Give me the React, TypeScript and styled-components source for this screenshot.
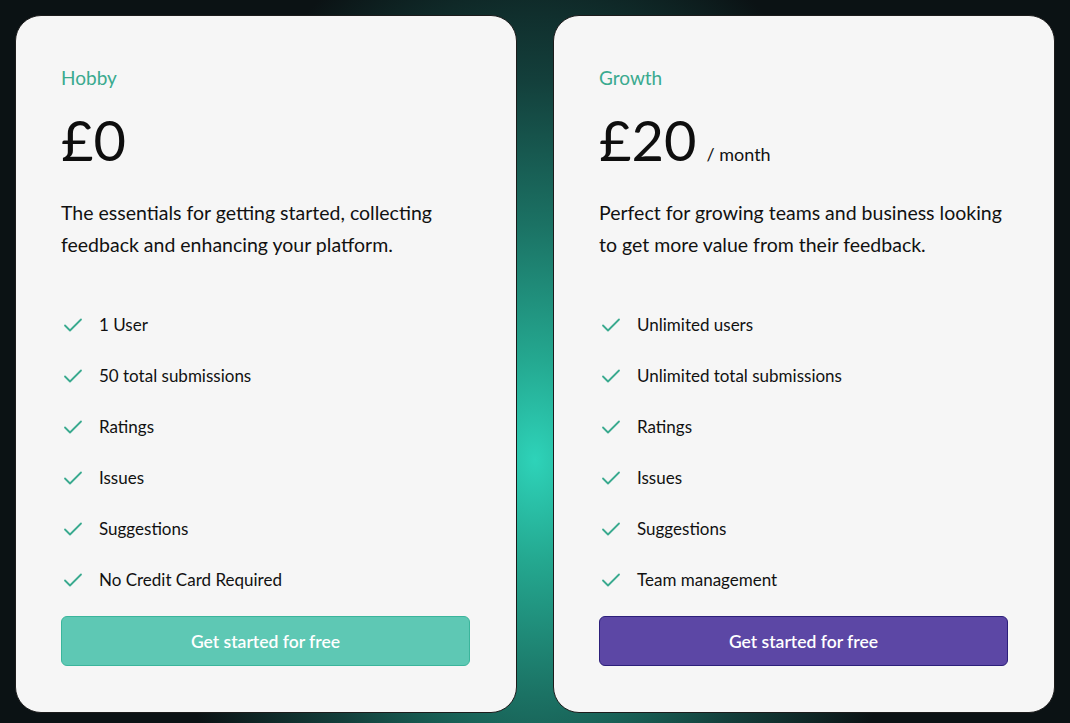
import React from "react";
import styled, { createGlobalStyle } from "styled-components";

const GlobalStyle = createGlobalStyle`
  * { box-sizing: border-box; }
  html, body { margin: 0; padding: 0; }
  body {
    font-family: "Lato", "Noto Sans", sans-serif;
    background: #0b1012;
  }
`;

type Plan = {
  name: string;
  price: string;
  period?: string;
  description: string;
  features: string[];
  variant: "teal" | "purple";
};

const plans: Plan[] = [
  {
    name: "Hobby",
    price: "£0",
    description:
      "The essentials for getting started, collecting feedback and enhancing your platform.",
    features: [
      "1 User",
      "50 total submissions",
      "Ratings",
      "Issues",
      "Suggestions",
      "No Credit Card Required",
    ],
    variant: "teal",
  },
  {
    name: "Growth",
    price: "£20",
    period: "/ month",
    description:
      "Perfect for growing teams and business looking to get more value from their feedback.",
    features: [
      "Unlimited users",
      "Unlimited total submissions",
      "Ratings",
      "Issues",
      "Suggestions",
      "Team management",
    ],
    variant: "purple",
  },
];

const Check = () => (
  <svg width="20" height="16" viewBox="0 0 20 16" fill="none">
    <path
      d="M2 8.5 L7 13.5 L18 2.5"
      stroke="#3aaa8f"
      strokeWidth="1.8"
      strokeLinecap="round"
      strokeLinejoin="round"
    />
  </svg>
);

const App = () => {
  return (
    <>
      <GlobalStyle />
      <Page>
        {plans.map((plan) => (
          <Card key={plan.name}>
            <PlanName>{plan.name}</PlanName>
            <PriceRow>
              <Price>{plan.price}</Price>
              {plan.period && <Period>{plan.period}</Period>}
            </PriceRow>
            <Description>{plan.description}</Description>
            <Features>
              {plan.features.map((f) => (
                <Feature key={f}>
                  <Check />
                  <span>{f}</span>
                </Feature>
              ))}
            </Features>
            <CtaButton variant={plan.variant}>Get started for free</CtaButton>
          </Card>
        ))}
      </Page>
    </>
  );
};

export default App;

const Page = styled.div`
  width: 1070px;
  height: 723px;
  overflow: hidden;
  display: grid;
  grid-template-columns: 502px 502px;
  column-gap: 36px;
  padding: 15px 15px 10px 15px;
  background: radial-gradient(
    ellipse 380px 560px at 535px 460px,
    #2ed3b9 0%,
    #24a890 18%,
    #1b7264 42%,
    #133f3b 68%,
    #0b1214 100%
  );
`;

const Card = styled.div`
  height: 698px;
  background: #f6f6f6;
  border: 1px solid #1c1c1c;
  border-radius: 26px;
  padding: 51px 46px 0 45px;
  display: flex;
  flex-direction: column;
  color: #111;
`;

const PlanName = styled.div`
  font-size: 19px;
  color: #3aaa8f;
  line-height: 22px;
`;

const PriceRow = styled.div`
  display: flex;
  align-items: baseline;
  gap: 10px;
  margin-top: 18px;
  height: 66px;
`;

const Price = styled.div`
  font-size: 56px;
  line-height: 66px;
  color: #0e0e0e;
`;

const Period = styled.div`
  font-size: 18px;
`;

const Description = styled.p`
  margin: 24px 0 0 0;
  font-size: 19.5px;
  line-height: 32px;
  max-width: 420px;
`;

const Features = styled.ul`
  list-style: none;
  margin: 54px 0 0 0;
  padding: 0;
  display: flex;
  flex-direction: column;
  gap: 31px;
`;

const Feature = styled.li`
  display: flex;
  align-items: center;
  gap: 16px;
  font-size: 17px;
  line-height: 20px;
  padding-left: 2px;
`;

const CtaButton = styled.button<{ variant: "teal" | "purple" }>`
  margin-top: 26px;
  width: 409px;
  height: 50px;
  border-radius: 6px;
  font-family: inherit;
  font-size: 17.5px;
  font-weight: 600;
  color: #fff;
  cursor: pointer;
  background: ${(p) => (p.variant === "teal" ? "#5ec8b4" : "#5c47a5")};
  border: 1px solid ${(p) => (p.variant === "teal" ? "#3bb59c" : "#2c1f7a")};
`;
